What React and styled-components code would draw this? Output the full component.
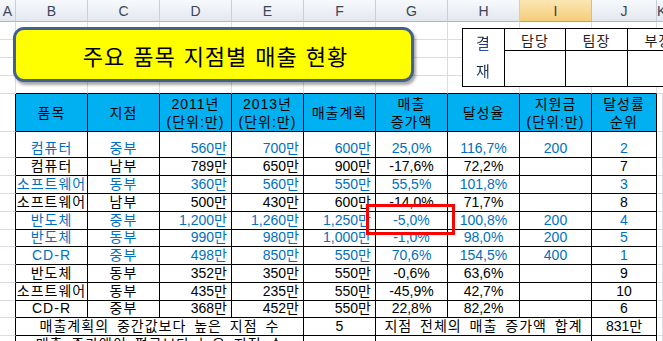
import React from "react";
import styled, { createGlobalStyle } from "styled-components";

const GRID = "#d9dde3";
const BLUE = "#0070c0";
const LETTERS = ["A", "B", "C", "D", "E", "F", "G", "H", "I", "J", "K"];

const rows = [
  { item: "컴퓨터", branch: "중부", y2011: "560만", y2013: "700만", plan: "600만", rise: "25,0%", rate: "116,7%", fund: "200", rank: "2", hot: true, h: 26 },
  { item: "컴퓨터", branch: "남부", y2011: "789만", y2013: "650만", plan: "900만", rise: "-17,6%", rate: "72,2%", fund: "", rank: "7", h: 18 },
  { item: "소프트웨어", branch: "동부", y2011: "360만", y2013: "560만", plan: "550만", rise: "55,5%", rate: "101,8%", fund: "", rank: "3", hot: true, h: 18 },
  { item: "소프트웨어", branch: "남부", y2011: "500만", y2013: "430만", plan: "600만", rise: "-14,0%", rate: "71,7%", fund: "", rank: "8", h: 18 },
  { item: "반도체", branch: "중부", y2011: "1,200만", y2013: "1,260만", plan: "1,250만", rise: "-5,0%", rate: "100,8%", fund: "200", rank: "4", hot: true, h: 17 },
  { item: "반도체", branch: "동부", y2011: "990만", y2013: "980만", plan: "1,000만", rise: "-1,0%", rate: "98,0%", fund: "200", rank: "5", hot: true, h: 18 },
  { item: "CD-R", branch: "중부", y2011: "498만", y2013: "850만", plan: "550만", rise: "70,6%", rate: "154,5%", fund: "400", rank: "1", hot: true, h: 18 },
  { item: "반도체", branch: "동부", y2011: "352만", y2013: "350만", plan: "550만", rise: "-0,6%", rate: "63,6%", fund: "", rank: "9", h: 18 },
  { item: "소프트웨어", branch: "동부", y2011: "435만", y2013: "235만", plan: "550만", rise: "-45,9%", rate: "42,7%", fund: "", rank: "10", h: 17 },
  { item: "CD-R", branch: "중부", y2011: "368만", y2013: "452만", plan: "550만", rise: "22,8%", rate: "82,2%", fund: "", rank: "6", h: 18 },
];

const App = () => {
  return (
    <>
      <GlobalStyle />
      <Sheet>
        <Row $h={22}>
          {LETTERS.map((l) => (
            <ColLabel key={l} $active={l === "I"}>
              {l}
            </ColLabel>
          ))}
        </Row>

        <TopBand>
          <BlankRows>
            {[0, 1, 2, 3].map((r) => (
              <Row key={r} $h={18}>
                {LETTERS.map((l, i) => (
                  <Blank key={l} $top={r === 3 && i > 0 && i < 10} />
                ))}
              </Row>
            ))}
          </BlankRows>
          <ShapeLayer>
            <TitleShape>주요 품목 지점별 매출 현황</TitleShape>
            <ApprovalBox>
              <SignLabel>
                <span>결</span>
                <span>재</span>
              </SignLabel>
              <ApprovalCell>담당</ApprovalCell>
              <ApprovalCell>팀장</ApprovalCell>
              <ApprovalCell>부장</ApprovalCell>
              <ApprovalCell />
              <ApprovalCell />
              <ApprovalCell />
            </ApprovalBox>
          </ShapeLayer>
        </TopBand>

        <Row $h={38}>
          <Blank $edge />
          <HeadCell>품목</HeadCell>
          <HeadCell>지점</HeadCell>
          <HeadCell>
            2011년
            <br />
            (단위:만)
          </HeadCell>
          <HeadCell>
            2013년
            <br />
            (단위:만)
          </HeadCell>
          <HeadCell>매출계획</HeadCell>
          <HeadCell>
            매출
            <br />
            증가액
          </HeadCell>
          <HeadCell>달성율</HeadCell>
          <HeadCell>
            지원금
            <br />
            (단위:만)
          </HeadCell>
          <HeadCell>
            달성률
            <br />
            순위
          </HeadCell>
          <Blank />
        </Row>

        {rows.map((r, idx) => (
          <Row key={idx} $h={r.h}>
            <Blank $edge />
            <DataCell $hot={r.hot} $wide>{r.item}</DataCell>
            <DataCell $hot={r.hot} $wide>{r.branch}</DataCell>
            <DataCell $hot={r.hot} $align="right">{r.y2011}</DataCell>
            <DataCell $hot={r.hot} $align="right">{r.y2013}</DataCell>
            <DataCell $hot={r.hot} $align="right">{r.plan}</DataCell>
            <DataCell $hot={r.hot}>{r.rise}</DataCell>
            <DataCell $hot={r.hot}>{r.rate}</DataCell>
            <DataCell $hot={r.hot}>{r.fund}</DataCell>
            <DataCell $hot={r.hot}>{r.rank}</DataCell>
            <Blank />
          </Row>
        ))}

        <Row $h={18}>
          <Blank $edge />
          <DataCell $span={4} $wide>매출계획의 중간값보다 높은 지점 수</DataCell>
          <DataCell>5</DataCell>
          <DataCell $span={3} $wide>지점 전체의 매출 증가액 합계</DataCell>
          <DataCell>831만</DataCell>
          <Blank />
        </Row>
        <Row $h={18}>
          <Blank $edge />
          <DataCell $span={4} $wide>매출 증가액이 평균보다 높은 지점 수</DataCell>
          <DataCell />
          <DataCell $span={3} />
          <DataCell />
          <Blank />
        </Row>

        <Highlight />
      </Sheet>
    </>
  );
};

const GlobalStyle = createGlobalStyle`
  html, body {
    margin: 0;
    padding: 0;
    background: #fff;
  }
  body {
    font-family: "Liberation Sans", "Noto Sans CJK KR", sans-serif;
    font-size: 14px;
    color: #000;
  }
`;

const Sheet = styled.div`
  position: relative;
  width: 663px;
  height: 341px;
  overflow: hidden;
  display: flex;
  flex-direction: column;
`;

const Row = styled.div`
  display: grid;
  grid-template-columns: 16px repeat(8, 72px) 65px 1fr;
  height: ${(p) => p.$h}px;
  flex-shrink: 0;
`;

const ColLabel = styled.div`
  box-sizing: border-box;
  display: flex;
  align-items: center;
  justify-content: center;
  font-size: 14px;
  color: ${(p) => (p.$active ? "#3b3b3b" : "#3a4656")};
  background: ${(p) =>
    p.$active
      ? "linear-gradient(#fbe6b4, #f6cd7a)"
      : "linear-gradient(#f7f9fc, #e3e8ef)"};
  border-right: 1px solid ${(p) => (p.$active ? "#f0b85a" : "#c6d0dc")};
  border-bottom: 1px solid ${(p) => (p.$active ? "#f29436" : "#a7b8cb")};
`;

const TopBand = styled.div`
  display: grid;
  flex-shrink: 0;
`;

const BlankRows = styled.div`
  grid-area: 1 / 1;
  display: flex;
  flex-direction: column;
`;

const Blank = styled.div`
  box-sizing: border-box;
  border-right: 1px solid ${(p) => (p.$edge ? "#000" : GRID)};
  border-bottom: 1px solid ${(p) => (p.$top ? "#000" : GRID)};
`;

const ShapeLayer = styled.div`
  grid-area: 1 / 1;
  display: flex;
  align-items: flex-start;
  padding: 5px 0 0 13px;
`;

const TitleShape = styled.div`
  box-sizing: border-box;
  flex-shrink: 0;
  width: 401px;
  height: 55px;
  border: 3px solid #41618f;
  border-radius: 11px;
  background: #ffff00;
  box-shadow: 2px 3px 3px rgba(0, 0, 0, 0.35);
  display: flex;
  align-items: center;
  justify-content: center;
  font-family: "Noto Sans CJK KR", sans-serif;
  font-size: 22px;
  letter-spacing: 1px;
  word-spacing: 2px;
  padding-left: 4px;
`;

const ApprovalBox = styled.div`
  flex-shrink: 0;
  margin: 1px 0 0 48px;
  display: grid;
  grid-template-columns: 42px 61px 62px 62px;
  grid-template-rows: 22px 36px;
  border-top: 1px solid #000;
  border-left: 1px solid #000;
  background: #fff;
`;

const ApprovalCell = styled.div`
  box-sizing: border-box;
  border-right: 1px solid #000;
  border-bottom: 1px solid #000;
  display: flex;
  align-items: center;
  justify-content: center;
  color: #222;
  font-size: 14px;
  letter-spacing: 1px;
`;

const SignLabel = styled(ApprovalCell)`
  grid-row: span 2;
  flex-direction: column;
  line-height: 28px;
  font-size: 15px;
  span {
    background: linear-gradient(#111 10%, #2f63c9 90%);
    -webkit-background-clip: text;
    background-clip: text;
    color: transparent;
  }
`;

const HeadCell = styled.div`
  box-sizing: border-box;
  background: #00b0f0;
  border-right: 1px solid #000;
  border-bottom: 1px solid #000;
  display: flex;
  align-items: center;
  justify-content: center;
  text-align: center;
  line-height: 18px;
  letter-spacing: 1px;
  white-space: nowrap;
`;

const DataCell = styled.div`
  box-sizing: border-box;
  grid-column: span ${(p) => p.$span || 1};
  border-right: 1px solid #000;
  border-bottom: 1px solid #000;
  display: flex;
  align-items: flex-end;
  justify-content: ${(p) => (p.$align === "right" ? "flex-end" : "center")};
  padding: 0 ${(p) => (p.$align === "right" ? "4px" : "0")} 1px 0;
  line-height: 16px;
  letter-spacing: ${(p) => (p.$wide ? "1px" : "0")};
  word-spacing: ${(p) => (p.$wide ? "3px" : "0")};
  white-space: nowrap;
  color: ${(p) => (p.$hot ? BLUE : "#000")};
`;

const Highlight = styled.div`
  position: absolute;
  left: 366px;
  top: 204px;
  width: 89px;
  height: 31px;
  box-sizing: border-box;
  border: 3px solid #ff0000;
  pointer-events: none;
`;

export default App;
